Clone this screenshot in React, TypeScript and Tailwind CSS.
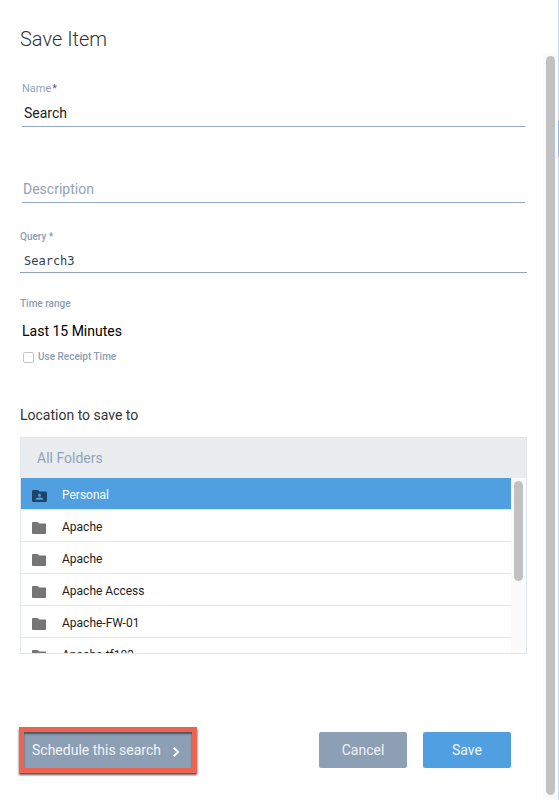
import React from "react";

const folders = ["Personal", "Apache", "Apache", "Apache Access", "Apache-FW-01", "Apache-tf103"];

function FolderIcon({ shared }: { shared: boolean }) {
  return (
    <svg
      viewBox="2 4 20 16"
      preserveAspectRatio="none"
      className={shared ? "mt-[2px] h-3 w-[15px] fill-[#1f4565]" : "mt-[2px] h-3 w-[14px] fill-[#757575]"}
      aria-hidden="true"
    >
      {shared ? (
        <path d="M20 6h-8l-2-2H4c-1.100 0-1.990.9-1.990 2L2 18c0 1.100.9 2 2 2h16c1.100 0 2-.9 2-2V8c0-1.100-.9-2-2-2zm-8 3c1.100 0 2 .9 2 2s-.9 2-2 2-2-.9-2-2 .9-2 2-2zm5 8H7v-1c0-1.330 2.670-2 5-2s5 .67 5 2v1z" />
      ) : (
        <path d="M10 4H3Q2 4 2 5V19Q2 20 3 20H21Q22 20 22 19V7Q22 6 21 6H12z" />
      )}
    </svg>
  );
}

function FolderPicker() {
  return (
    <section className="border border-[#e0e6e9]">
      <header className="flex h-10 items-center bg-[#e9edf0] px-4 text-sm text-[#92a2b8]">All Folders</header>
      <div className="flex h-[175px] overflow-hidden">
        <ul className="min-w-0 flex-1">
          {folders.map((name, i) => (
            <li key={i} className="border-b border-[#e0e6e9]">
              <button
                type="button"
                className={
                  i === 0
                    ? "flex h-[31px] w-full items-center bg-[#509fe0] pt-[2px] pl-[11px] text-left text-xs text-white"
                    : "flex h-[31px] w-full items-center bg-white pt-[2px] pl-[11px] text-left text-xs text-[#222222]"
                }
              >
                <span className="w-[30px]">
                  <FolderIcon shared={i === 0} />
                </span>
                {name}
              </button>
            </li>
          ))}
        </ul>
        <div className="w-[15px] bg-[#fafafa] px-[3px] pt-[3px]">
          <div className="h-[100px] rounded-full bg-[#c1c1c1]" />
        </div>
      </div>
    </section>
  );
}

export default function App() {
  return (
    <div className="flex min-h-screen bg-white font-[Roboto,sans-serif] text-[#333333]">
      <main className="flex min-w-0 flex-1 flex-col pr-4 pb-[27px] pl-5">
        <h1 className="pt-6 text-xl leading-[30px] font-light">Save Item</h1>

        <form className="flex flex-1 flex-col pt-[27px]" onSubmit={(e) => e.preventDefault()}>
          <div className="flex flex-col pr-[2px] pl-[2px]">
            <label htmlFor="name" className="text-[11px] leading-4 text-[#92a2b8]">
              Name<span className="pl-px text-[#666666]">*</span>
            </label>
            <input
              id="name"
              defaultValue="Search"
              className="mt-[3px] h-[27px] border-b border-[#92a9c6] px-[2px] text-sm text-[#222222] outline-none"
            />
            <input
              aria-label="Description"
              placeholder="Description"
              className="mt-[49px] h-[27px] border-b border-[#92a9c6] px-px text-sm outline-none placeholder:text-[#92a2b8]"
            />
          </div>

          <label htmlFor="query" className="mt-[26px] text-[10px] leading-4 font-medium text-[#8c9db4]">
            Query *
          </label>
          <input
            id="query"
            defaultValue="Search3"
            className="mt-1 h-6 border-b border-[#92a2b8] px-1 font-['DejaVu_Sans_Mono',monospace] text-xs text-[#34404f] outline-none"
          />

          <h2 className="mt-[23px] text-[10px] leading-4 font-medium text-[#8c9db4]">Time range</h2>
          <p className="mt-2 pl-[2px] text-sm leading-[22px] text-black">Last 15 Minutes</p>
          <label className="mt-[7px] flex items-center gap-1 pl-[3px] text-[10px] leading-4 font-medium text-[#8c9db4]">
            <input type="checkbox" className="size-[11px] appearance-none rounded-[2px] border border-[#c4c4c4] bg-white" />
            Use Receipt Time
          </label>

          <h2 className="mt-10 mb-3 text-sm leading-5">Location to save to</h2>
          <FolderPicker />

          <div className="mt-auto flex items-center pr-4 text-sm">
            <div className="-ml-px border-[5px] border-[#ec6352] shadow-[0_2px_2px_#555555]">
              <button
                type="button"
                className="flex h-9 w-[168px] items-center gap-3 bg-[#8c9fb4] pl-2 text-[#f1f4f7] shadow-[inset_0_2px_2px_#4c535b]"
              >
                Schedule this search
                <svg viewBox="0 0 6 10" className="mt-1 h-[10px] w-[6px] fill-none stroke-white stroke-[2]" aria-hidden="true">
                  <path d="M0.700 0.700L5 5L0.700 9.300" />
                </svg>
              </button>
            </div>
            <button type="button" className="ml-auto h-9 w-[88px] rounded-[2px] bg-[#8c9fb4] text-[#eef1f5]">
              Cancel
            </button>
            <button type="submit" className="ml-4 h-9 w-[88px] rounded-[2px] bg-[#509fe0] text-[#eef5fb]">
              Save
            </button>
          </div>
        </form>
      </main>

      <div className="flex w-[15px] flex-col pt-[53px]">
        <div className="flex flex-1 flex-col bg-[#fafafa] px-[3px] pt-[3px] pb-[5px]">
          <div className="w-[9px] flex-1 rounded-full bg-[#c1c1c1]" />
        </div>
      </div>
      <div className="w-px bg-[#d0dae2] pt-[121px]">
        <div className="h-9 bg-[#91bbe0]" />
      </div>
    </div>
  );
}
